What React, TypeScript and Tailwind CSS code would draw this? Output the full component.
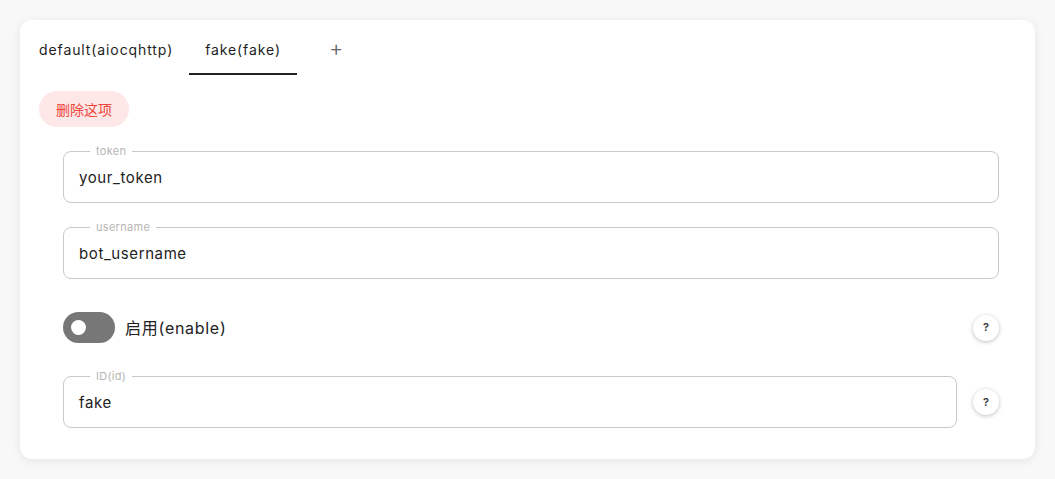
import { useState } from 'react'

function OutlinedField({ label, value }: { label: string; value: string }) {
  return (
    <div className="relative flex-1 h-[52px] rounded-lg border border-[#c9c9c9] flex items-center px-[15px]">
      <span className="absolute -top-[8px] left-[26px] bg-white px-[6px] text-[11px] leading-[14px] tracking-[0.3px] text-[#b5b5b5]">
        {label}
      </span>
      <span className="text-[15px] tracking-[0.6px] text-[#222] pt-[2px]">{value}</span>
    </div>
  )
}

function HelpButton() {
  return (
    <button className="w-[26px] h-[26px] rounded-full bg-white shadow-[0_1px_4px_rgba(0,0,0,0.25)] flex items-center justify-center text-[11px] font-semibold text-[#333]">
      ?
    </button>
  )
}

export default function App() {
  const [tab, setTab] = useState(1)
  const [enabled, setEnabled] = useState(false)
  const tabs = ['default(aiocqhttp)', 'fake(fake)']

  return (
    <div
      className="min-h-screen bg-[#f8f8f8] p-[20px]"
      style={{ fontFamily: "Inter, 'Noto Sans CJK SC', sans-serif" }}
    >
      <div className="bg-white rounded-xl shadow-[0_2px_10px_rgba(0,0,0,0.08)] h-[439px] pl-[3px] pr-[36px]">
        {/* Tabs */}
        <div className="flex items-stretch h-[55px]">
          {tabs.map((t, i) => (
            <button
              key={t}
              onClick={() => setTab(i)}
              className={`px-[16px] pt-[6px] text-[14px] tracking-[0.9px] text-[#1e1e1e] border-b-2 ${
                tab === i ? 'border-[#222]' : 'border-transparent'
              }`}
            >
              {t}
            </button>
          ))}
          <button className="ml-[32px] pt-[1px] text-[22px] font-light text-[#666] leading-none">+</button>
        </div>

        <div className="pl-[16px] mt-[16px]">
          <button
            className="h-[36px] px-[17px] rounded-full bg-[#fde7e7] text-[14px] text-[#f0443a]"
            style={{ fontFamily: "'Noto Sans CJK SC', sans-serif" }}
          >
            删除这项
          </button>
        </div>

        <div className="pl-[40px] mt-[24px] flex flex-col">
          <div className="flex">
            <OutlinedField label="token" value="your_token" />
          </div>
          <div className="flex mt-[24px]">
            <OutlinedField label="username" value="bot_username" />
          </div>

          <div className="flex items-center justify-between mt-[33px] h-[31px]">
            <div className="flex items-center gap-[10px]">
              <button
                onClick={() => setEnabled(!enabled)}
                className={`w-[52px] h-[31px] rounded-full flex items-center px-[8px] ${
                  enabled ? 'bg-[#222] justify-end' : 'bg-[#777] justify-start'
                }`}
              >
                <span className="w-[15px] h-[15px] rounded-full bg-white" />
              </button>
              <span className="text-[16px] tracking-[0.7px] text-[#222]">启用(enable)</span>
            </div>
            <HelpButton />
          </div>

          <div className="flex items-center gap-[16px] mt-[33px]">
            <OutlinedField label="ID(id)" value="fake" />
            <HelpButton />
          </div>
        </div>
      </div>
    </div>
  )
}
